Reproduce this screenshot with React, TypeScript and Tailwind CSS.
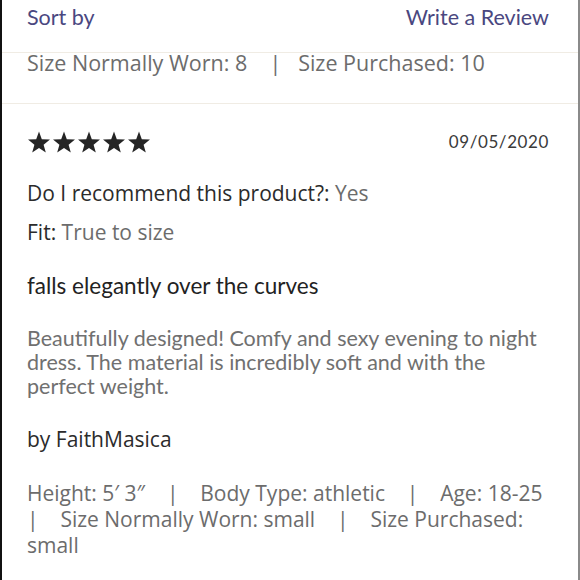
const Star = () => (
  <svg viewBox="0 0 24 24" className="w-[24px] h-[24px] fill-[#252525]">
    <path d="M12 1.6l2.8 7.7 8.2.3-6.4 5.1 2.2 7.9L12 18l-6.8 4.6 2.2-7.9L1 9.6l8.2-.3z" />
  </svg>
);

const optima = "font-['Open_Sans','Noto_Sans',sans-serif]";
const sep = "\u00a0\u00a0\u00a0";
const sepR = "\u00a0\u00a0\u00a0\u00a0";

const App = () => {
  return (
    <div className="w-[580px] h-[580px] overflow-hidden bg-white border-l-2 border-l-[#111] border-r-2 border-r-[#8a8a8a] font-['Lato',sans-serif]">
      <div className="flex justify-between h-[52px] pl-[25px] pr-[29px] text-[21.5px] leading-[34px] text-[#4a4780]">
        <span>Sort by</span>
        <span>Write a Review</span>
      </div>
      <div
        className={`border-t border-[#f0ece4] h-[51px] pl-[25px] text-[21.5px] leading-[20px] text-[#6c6c6c] ${optima}`}
      >
        Size Normally Worn: 8{sep} |{sep}Size Purchased: 10
      </div>
      <div className="border-t border-[#f0ece4] pl-[25px] pr-[29px]">
        <div className="flex justify-between items-center h-[24px] mt-[26px]">
          <div className="flex gap-[1px]">
            <Star />
            <Star />
            <Star />
            <Star />
            <Star />
          </div>
          <span className="text-[17px] tracking-[0.6px] text-[#3a3a3a]">09/05/2020</span>
        </div>
        <div className={`mt-[26px] text-[21px] leading-[26px] text-[#2b2b2b] ${optima}`}>
          Do I recommend this product?: <span className="text-[#6c6c6c]">Yes</span>
        </div>
        <div className={`mt-[13px] text-[21px] leading-[26px] text-[#2b2b2b] ${optima}`}>
          Fit: <span className="text-[#6c6c6c]">True to size</span>
        </div>
        <div className="mt-[28px] text-[22.5px] leading-[26px] text-[#222]">
          falls elegantly over the curves
        </div>
        <p className="mt-[27px] text-[21.5px] leading-[24px] text-[#707070]">
          Beautifully designed! Comfy and sexy evening to night dress. The material is incredibly soft
          and with the perfect weight.
        </p>
        <div className={`mt-[28px] text-[21px] leading-[26px] text-[#2b2b2b] ${optima}`}>
          by FaithMasica
        </div>
        <p className={`mt-[28px] mr-[-14px] text-[21px] leading-[26px] text-[#6c6c6c] ${optima}`}>
          Height: 5′ 3″{sep} |{sepR}Body Type: athletic{sep} |{sepR}
          <span className="whitespace-nowrap">Age: 18-25</span>
          {sep} |{sepR}Size Normally Worn: small{sep} |{sepR}Size Purchased: small
        </p>
      </div>
    </div>
  );
};

export default App;
